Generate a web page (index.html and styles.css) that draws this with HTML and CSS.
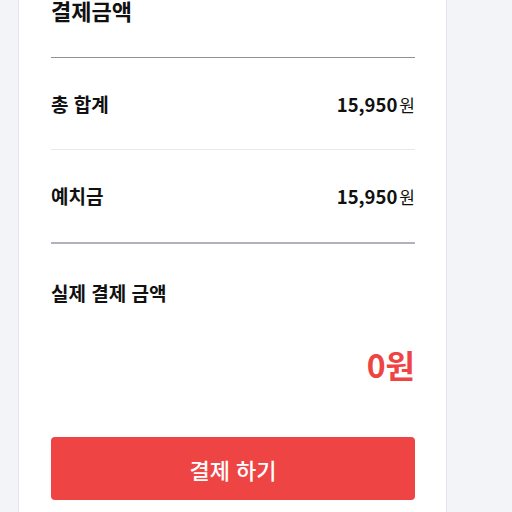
FILE: index.html
```html
<!DOCTYPE html>
<html lang="ko">
<head>
<meta charset="utf-8">
<link rel="stylesheet" href="styles.css">
</head>
<body>
<div class="page">
  <section class="card">
    <h2 class="title">결제금액</h2>
    <div class="row row-first">
      <span class="label">총 합계</span>
      <span class="value"><b>15,950</b><small>원</small></span>
    </div>
    <div class="row row-second">
      <span class="label">예치금</span>
      <span class="value"><b>15,950</b><small>원</small></span>
    </div>
    <div class="final">
      <div class="label">실제 결제 금액</div>
      <div class="total">0원</div>
    </div>
    <button class="pay">결제 하기</button>
  </section>
</div>
</body>
</html>
```
FILE: styles.css
```css
html, body {
  margin: 0;
  padding: 0;
  background: #f3f4f8;
  font-family: "Noto Sans CJK KR", "Noto Sans", sans-serif;
  color: #111;
}
.page {
  height: 512px;
  overflow: hidden;
}
.card {
  margin-left: 18px;
  width: 364px;
  padding: 0 31px 20px 32px;
  background: #fff;
  border-left: 1px solid #e2e5ec;
  border-right: 1px solid #e2e5ec;
  min-height: 512px;
}
.title {
  margin: 0;
  font-size: 22px;
  line-height: 20px;
  font-weight: 700;
  padding-bottom: 37px;
  border-bottom: 1px solid #8e9197;
}
.row {
  display: flex;
  justify-content: space-between;
  align-items: center;
  height: 91px;
}
.row-first {
  border-bottom: 1px solid #e8e9ec;
}
.row-second {
  height: 92px;
  border-bottom: 2px solid #b1b3b8;
}
.label {
  font-size: 19px;
  font-weight: 700;
  line-height: 24px;
}
.value {
  display: flex;
  align-items: baseline;
  gap: 2px;
}
.value b {
  font-size: 18.5px;
  font-weight: 700;
}
.value small {
  font-size: 17px;
  font-weight: 400;
}
.final {
  padding-top: 37px;
}
.total {
  text-align: right;
  color: #ef4444;
  font-size: 32px;
  font-weight: 700;
  line-height: 40px;
  margin-top: 39px;
}
.pay {
  display: block;
  width: 100%;
  height: 63px;
  margin-top: 53px;
  border: 0;
  border-radius: 4px;
  background: #ef4444;
  color: #fff;
  font-family: inherit;
  font-size: 22px;
  font-weight: 500;
}
```
